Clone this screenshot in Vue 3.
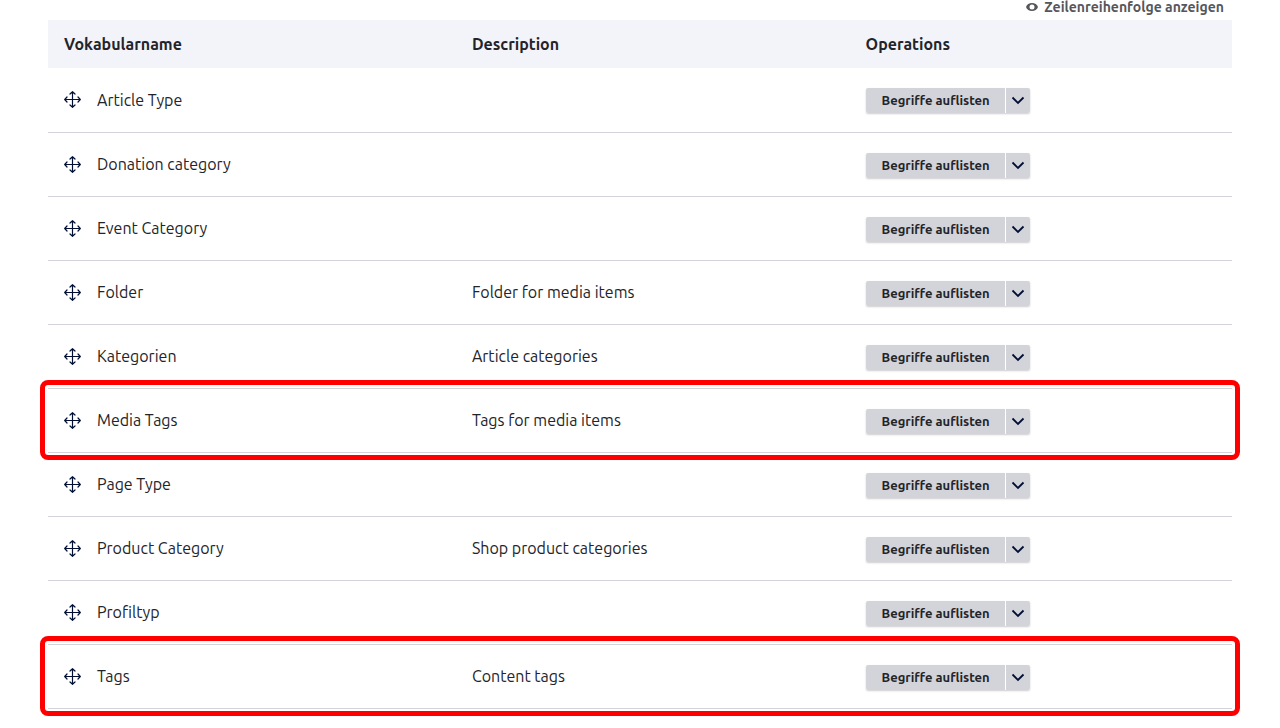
<script setup>
const vocabularies = [
  { name: 'Article Type', description: '' },
  { name: 'Donation category', description: '' },
  { name: 'Event Category', description: '' },
  { name: 'Folder', description: 'Folder for media items' },
  { name: 'Kategorien', description: 'Article categories' },
  { name: 'Media Tags', description: 'Tags for media items', marked: true },
  { name: 'Page Type', description: '' },
  { name: 'Product Category', description: 'Shop product categories' },
  { name: 'Profiltyp', description: '' },
  { name: 'Tags', description: 'Content tags', marked: true },
]
</script>

<template>
  <main class="page">
    <div class="toolbar">
      <button type="button" class="weights">
        <svg class="eye" viewBox="0 0 12 8" aria-hidden="true">
          <path fill-rule="evenodd" d="M6 0C3.2 0 .9 1.6 0 4c.9 2.4 3.2 4 6 4s5.100-1.600 6-4C11.100 1.600 8.800 0 6 0Zm0 6.500A2.500 2.500 0 1 1 6 1.500a2.500 2.500 0 0 1 0 5Z" />
        </svg>
        <span>Zeilenreihenfolge anzeigen</span>
      </button>
    </div>
    <table class="vocabularies">
      <thead>
        <tr>
          <th scope="col" class="col-name">Vokabularname</th>
          <th scope="col" class="col-description">Description</th>
          <th scope="col">Operations</th>
        </tr>
      </thead>
      <tbody>
        <tr v-for="item in vocabularies" :key="item.name" :class="{ marked: item.marked }">
          <td>
            <div class="name">
              <a href="#" class="handle" :aria-label="item.name + ' verschieben'">
                <svg viewBox="0 0 17 17" aria-hidden="true">
                  <path d="M8.500 1v15M1 8.500h15M6 3 8.500.700 11 3M6 14l2.500 2.300L11 14M3 6 .700 8.500 3 11M14 6l2.300 2.500L14 11" />
                </svg>
              </a>
              <span>{{ item.name }}</span>
            </div>
          </td>
          <td>{{ item.description }}</td>
          <td class="operations">
            <div class="dropbutton">
              <a href="#" class="action">Begriffe auflisten</a>
              <button type="button" class="toggle" aria-label="Weitere Aktionen">
                <svg viewBox="0 0 14 9" aria-hidden="true"><path d="m1.500 1.500 5.500 5.500 5.500-5.500" /></svg>
              </button>
            </div>
          </td>
        </tr>
      </tbody>
    </table>
  </main>
</template>

<style>
body {
  background: #fff;
}
</style>

<style scoped>
.page {
  padding: 0 48px 16px;
  overflow: hidden;
  color: #232429;
  font: 16px/24px Ubuntu, "Noto Sans", sans-serif;
}
.toolbar {
  display: flex;
  justify-content: flex-end;
  height: 20px;
  padding-right: 8px;
}
.weights {
  display: flex;
  align-items: center;
  gap: 6px;
  height: 14px;
  padding: 0;
  border: 0;
  background: none;
  color: #55565b;
  font: bold 14px/14px Ubuntu, "Noto Sans", sans-serif;
}
.eye {
  width: 12px;
  height: 8px;
  fill: currentColor;
}
.vocabularies {
  width: 100%;
  table-layout: fixed;
  border-collapse: separate;
  border-spacing: 0;
}
.col-name {
  width: 34.45%;
}
.col-description {
  width: 33.25%;
}
th {
  box-sizing: border-box;
  height: 48px;
  padding: 0 16px;
  background: #f3f4f9;
  text-align: left;
}
td {
  box-sizing: border-box;
  height: 64px;
  padding: 0 16px 1px;
  border-bottom: 1px solid #d3d4d9;
}
tbody tr:first-child td {
  height: 65px;
}
td.operations {
  padding-top: 20px;
  vertical-align: top;
}
.name {
  display: flex;
  align-items: center;
  gap: 16px;
}
.handle {
  display: block;
  width: 17px;
  height: 17px;
}
.handle svg {
  display: block;
  fill: none;
  stroke: #000f33;
  stroke-width: 1.2;
  stroke-linecap: round;
  stroke-linejoin: round;
}
.dropbutton {
  display: flex;
  width: fit-content;
  height: 25px;
  border-radius: 2px;
  box-shadow: 0 1px 2px #0003;
}
.action {
  display: flex;
  align-items: center;
  padding: 0 15px 1px 16px;
  border-radius: 2px 0 0 2px;
  background: #d3d4d9;
  color: #232429;
  font-size: 13px;
  font-weight: bold;
  text-decoration: none;
}
.toggle {
  display: grid;
  place-items: center;
  width: 25px;
  padding: 0 0 1px;
  border: 0;
  border-left: 1px solid #fff;
  border-radius: 0 2px 2px 0;
  background: #d3d4d9;
}
.toggle svg {
  width: 14px;
  height: 9px;
  fill: none;
  stroke: #000f33;
  stroke-width: 1.8;
}
.marked {
  position: relative;
}
.marked td:first-child::after {
  content: "";
  position: absolute;
  inset: -9px -8px -7px;
  border: 5px solid #f00;
  border-radius: 8px;
  pointer-events: none;
}
</style>
